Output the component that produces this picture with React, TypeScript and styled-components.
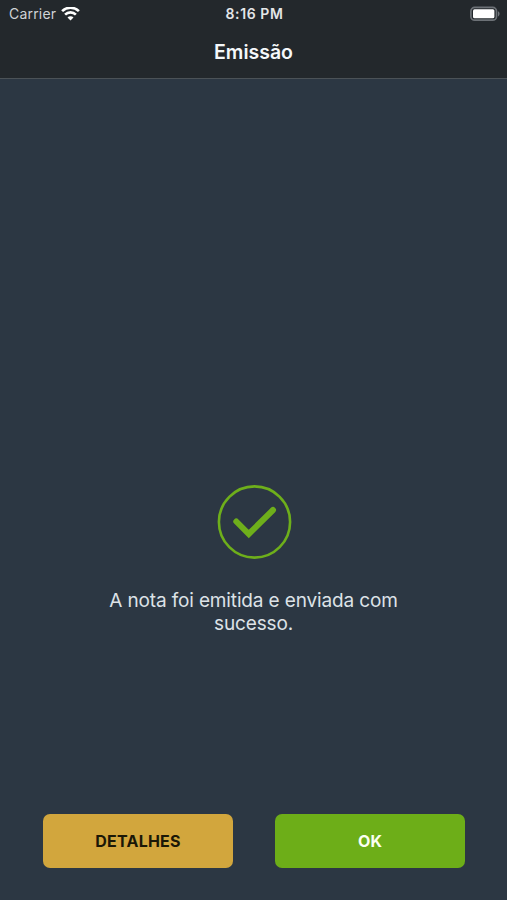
import React from 'react';
import styled, { createGlobalStyle } from 'styled-components';

const GlobalStyle = createGlobalStyle`
  * { box-sizing: border-box; }
  body { margin: 0; background: #2c3743; }
`;

const Screen = styled.div`
  display: flex;
  flex-direction: column;
  height: 900px;
  overflow: hidden;
  background: #2c3743;
  font-family: Inter, "Liberation Sans", sans-serif;
`;

const Header = styled.header`
  height: 79px;
  background: #23282c;
  border-bottom: 1px solid #4b5257;
`;

const StatusBar = styled.div`
  display: grid;
  grid-template-columns: 1fr auto 1fr;
  align-items: center;
  height: 27px;
  padding: 0 7px 0 9px;
  color: #e3e6e8;
`;

const Carrier = styled.div`
  display: flex;
  align-items: center;
  gap: 5px;
  font-size: 14px;
  letter-spacing: 0.2px;
  color: #cfd3d6;
`;

const Clock = styled.time`
  font-size: 14px;
  font-weight: 600;
  letter-spacing: 0.6px;
`;

const BatterySlot = styled.div`
  display: flex;
  justify-content: flex-end;
`;

const Title = styled.h1`
  margin: 0;
  padding-top: 12px;
  font-size: 19.5px;
  line-height: 27px;
  font-weight: 600;
  text-align: center;
  color: #f5f8fa;
`;

const Content = styled.main`
  flex: 1;
  display: flex;
  flex-direction: column;
  align-items: center;
  padding-top: 405px;
`;

const Message = styled.p`
  width: 310px;
  margin: 29px 0 0;
  font-size: 19px;
  line-height: 23px;
  letter-spacing: -0.14px;
  text-align: center;
  color: #dde2e7;
`;

const Actions = styled.footer`
  display: grid;
  grid-template-columns: 1fr 1fr;
  gap: 42px;
  padding: 0 42px 32px 43px;
`;

const ActionButton = styled.button<{ $tone: 'gold' | 'green' }>`
  height: 54px;
  padding: 0;
  border: 0;
  border-radius: 7px;
  font: 700 16px/54px Inter, "Liberation Sans", sans-serif;
  letter-spacing: 0.2px;
  background: ${({ $tone }) => ($tone === 'gold' ? '#d2a63d' : '#6dae18')};
  color: ${({ $tone }) => ($tone === 'gold' ? '#1b1807' : '#fafff2')};
`;

const WifiIcon = () => (
  <svg width="19" height="14" viewBox="0 0 19 14" fill="none" stroke="#fff" strokeWidth="2.6">
    <path d="M1.1 4.2a11.9 11.9 0 0 1 16.8 0" />
    <path d="M4.1 7.6a7.6 7.6 0 0 1 10.8 0" />
    <path d="M9.5 13.4 6.5 10.4a4.2 4.2 0 0 1 6 0z" fill="#fff" stroke="none" />
  </svg>
);

const BatteryIcon = () => (
  <svg width="31" height="16" viewBox="0 0 31 16">
    <rect x="1.9" y="1.4" width="25.6" height="12.8" rx="3.8" fill="none" stroke="#6c7176" strokeWidth="1.7" />
    <rect x="4" y="3.3" width="21.4" height="9" rx="1.5" fill="#fff" />
    <path d="M29 5.2c2.1 1 2.1 4.2 0 5.2z" fill="#70757a" />
  </svg>
);

const SuccessIcon = () => (
  <svg width="76" height="76" viewBox="0 0 76 76" fill="none" stroke="#6eaf1b">
    <circle cx="38.5" cy="38" r="35.6" strokeWidth="2.6" />
    <path d="M20.3 37.5 32.8 50 57 26" strokeWidth="6" strokeLinecap="round" />
  </svg>
);

export default function App() {
  return (
    <Screen>
      <GlobalStyle />
      <Header>
        <StatusBar>
          <Carrier>
            Carrier
            <WifiIcon />
          </Carrier>
          <Clock>8:16 PM</Clock>
          <BatterySlot>
            <BatteryIcon />
          </BatterySlot>
        </StatusBar>
        <Title>Emissão</Title>
      </Header>
      <Content>
        <SuccessIcon />
        <Message>A nota foi emitida e enviada com sucesso.</Message>
      </Content>
      <Actions>
        <ActionButton $tone="gold">DETALHES</ActionButton>
        <ActionButton $tone="green">OK</ActionButton>
      </Actions>
    </Screen>
  );
}
